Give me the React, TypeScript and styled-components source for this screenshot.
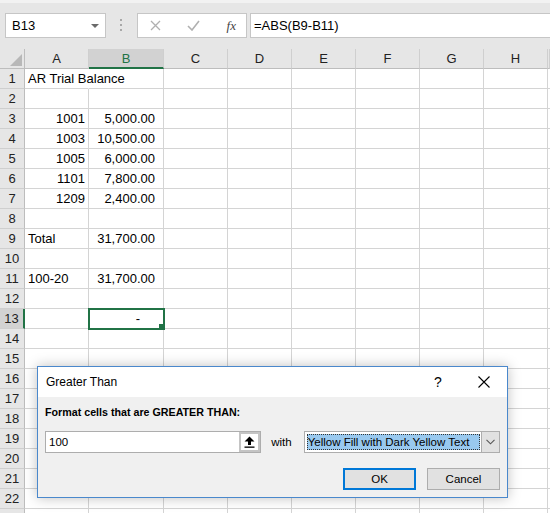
import React from 'react';
import styled, { createGlobalStyle } from 'styled-components';

const GlobalStyle = createGlobalStyle`
  html, body {
    margin: 0;
    padding: 0;
    background: #ffffff;
    overflow: hidden;
  }
  * { box-sizing: border-box; }
`;

const COLS = '25px 64px 75px 64px 64px 64px 64px 64px 64px 1fr';
const GREEN = '#217346';

const Page = styled.div`
  position: relative;
  width: 550px;
  height: 513px;
  overflow: hidden;
  font-family: 'Liberation Sans', Arial, sans-serif;
  font-size: 13px;
  color: #000;
`;

const TopBar = styled.div`
  height: 49px;
  background: #e6e6e6;
  border-top: 3px solid #f2f2f2;
  display: flex;
  align-items: flex-start;
  padding: 10px 0 0 5px;
`;

const NameBox = styled.div`
  width: 101px;
  height: 25px;
  background: #fff;
  border: 1px solid #c6c6c6;
  display: flex;
  align-items: center;
  justify-content: space-between;
  padding: 0 6px 0 6px;
  font-size: 13px;
`;

const DropArrow = styled.span`
  width: 0;
  height: 0;
  border-left: 4px solid transparent;
  border-right: 4px solid transparent;
  border-top: 4px solid #6a6a6a;
`;

const Grip = styled.div`
  width: 31px;
  height: 25px;
  display: flex;
  align-items: center;
  justify-content: center;
`;

const FxBox = styled.div`
  width: 110px;
  height: 25px;
  background: #fff;
  border: 1px solid #c6c6c6;
  display: flex;
  align-items: center;
  justify-content: space-between;
  padding: 0 10px 0 12px;
`;

const Fx = styled.span`
  font-family: 'Liberation Serif', 'Times New Roman', serif;
  font-style: italic;
  font-size: 13px;
  color: #444;
`;

const FormulaInput = styled.div`
  flex: 1;
  height: 25px;
  margin-left: 3px;
  background: #fff;
  border: 1px solid #c6c6c6;
  border-right: none;
  display: flex;
  align-items: center;
  padding-left: 3px;
`;

const Row = styled.div`
  display: grid;
  grid-template-columns: ${COLS};
  height: 20px;
`;

const ColHead = styled.div<{ $sel?: boolean }>`
  background: ${(p) => (p.$sel ? '#d2d2d2' : '#e6e6e6')};
  border-right: 1px solid #cfcfcf;
  border-bottom: ${(p) => (p.$sel ? `2px solid ${GREEN}` : '1px solid #bdbdbd')};
  color: ${(p) => (p.$sel ? GREEN : '#222')};
  display: flex;
  align-items: center;
  justify-content: center;
  padding-top: ${(p) => (p.$sel ? '1px' : '0')};
`;

const Corner = styled.div`
  background: #e6e6e6;
  border-right: 1px solid #bdbdbd;
  border-bottom: 1px solid #bdbdbd;
  position: relative;
  &::after {
    content: '';
    position: absolute;
    right: 2px;
    bottom: 2px;
    width: 0;
    height: 0;
    border-left: 12px solid transparent;
    border-bottom: 12px solid #b8b8b8;
  }
`;

const RowHead = styled.div<{ $sel?: boolean }>`
  background: ${(p) => (p.$sel ? '#d2d2d2' : '#e6e6e6')};
  border-right: ${(p) => (p.$sel ? `2px solid ${GREEN}` : '1px solid #bdbdbd')};
  border-bottom: 1px solid #cfcfcf;
  display: flex;
  align-items: center;
  justify-content: center;
  color: #222;
`;

const Cell = styled.div<{ $right?: boolean; $pad?: number; $open?: boolean }>`
  border-right: 1px solid ${(p) => (p.$open ? 'transparent' : '#d4d4d4')};
  border-bottom: 1px solid #d4d4d4;
  display: flex;
  align-items: center;
  justify-content: ${(p) => (p.$right ? 'flex-end' : 'flex-start')};
  padding: ${(p) => (p.$right ? `0 ${p.$pad ?? 3}px 0 0` : '0 0 0 3px')};
  white-space: nowrap;
  overflow: ${(p) => (p.$open ? 'visible' : 'hidden')};
  position: relative;
  z-index: ${(p) => (p.$open ? 1 : 0)};
`;

const ActiveCell = styled(Cell)`
  outline: 2px solid ${GREEN};
  outline-offset: -1px;
  z-index: 2;
  &::after {
    content: '';
    position: absolute;
    right: -3px;
    bottom: -3px;
    width: 6px;
    height: 6px;
    background: ${GREEN};
    border: 1px solid #fff;
  }
`;

const Dialog = styled.div`
  position: absolute;
  left: 37px;
  top: 366px;
  width: 471px;
  height: 132px;
  background: #f0f0f0;
  border: 1px solid #4a88cc;
  box-shadow: 0 0 12px rgba(0, 0, 0, 0.25);
  font-family: 'Liberation Sans', Arial, sans-serif;
  font-size: 11.5px;
  display: flex;
  flex-direction: column;
  z-index: 10;
`;

const TitleBar = styled.div`
  height: 30px;
  background: #fff;
  display: flex;
  align-items: center;
  padding: 0 0 0 8px;
  font-size: 12px;
`;

const TitleText = styled.span`
  flex: 1;
`;

const TitleBtn = styled.div`
  width: 46px;
  height: 30px;
  display: flex;
  align-items: center;
  justify-content: center;
  font-size: 14px;
`;

const Body = styled.div`
  flex: 1;
  display: flex;
  flex-direction: column;
  padding: 7px 7px 0 7px;
`;

const Label = styled.div`
  font-weight: bold;
  font-size: 10.7px;
  height: 16px;
  line-height: 16px;
`;

const InputRow = styled.div`
  margin-top: 11px;
  display: flex;
  align-items: center;
  height: 22px;
`;

const ValueBox = styled.div`
  width: 217px;
  height: 22px;
  background: #fff;
  border: 1px solid #adadad;
  display: flex;
  align-items: center;
  padding-left: 3px;
`;

const ValueText = styled.span`
  flex: 1;
`;

const PickBtn = styled.div`
  width: 21px;
  height: 20px;
  border: 2px solid #c4c4c4;
  background: #fff;
  display: flex;
  align-items: center;
  justify-content: center;
`;

const With = styled.span`
  margin: 0 12px 0 10px;
`;

const Select = styled.div`
  width: 197px;
  height: 22px;
  border: 1px solid #adadad;
  background: #fff;
  display: flex;
  align-items: stretch;
  padding: 2px 0 2px 2px;
`;

const SelectValue = styled.div`
  flex: 1;
  background: #99c9ef;
  outline: 1px dotted #333;
  outline-offset: -1px;
  display: flex;
  align-items: center;
  padding-left: 1px;
  white-space: nowrap;
  overflow: hidden;
`;

const SelectArrow = styled.div`
  width: 18px;
  margin: -2px 0 -2px 1px;
  background: #e1e1e1;
  border-left: 1px solid #adadad;
  display: flex;
  align-items: center;
  justify-content: center;
`;

const Buttons = styled.div`
  margin-top: 15px;
  display: flex;
  justify-content: flex-end;
  gap: 11px;
`;

const Button = styled.div<{ $primary?: boolean }>`
  width: 73px;
  height: 22px;
  background: #e1e1e1;
  border: ${(p) => (p.$primary ? '2px solid #0078d7' : '1px solid #adadad')};
  display: flex;
  align-items: center;
  justify-content: center;
`;

type CellData = { a?: string; b?: string; aLeft?: boolean; open?: boolean };

const data: Record<number, CellData> = {
  1: { a: 'AR Trial Balance', aLeft: true, open: true },
  3: { a: '1001', b: '5,000.00' },
  4: { a: '1003', b: '10,500.00' },
  5: { a: '1005', b: '6,000.00' },
  6: { a: '1101', b: '7,800.00' },
  7: { a: '1209', b: '2,400.00' },
  9: { a: 'Total', b: '31,700.00', aLeft: true },
  11: { a: '100-20', b: '31,700.00', aLeft: true },
};

const cols = ['A', 'B', 'C', 'D', 'E', 'F', 'G', 'H', ''];

const Dots = () => (
  <svg width="3" height="13" viewBox="0 0 3 13">
    <rect x="0" y="0" width="2" height="2" fill="#a8a8a8" />
    <rect x="0" y="5" width="2" height="2" fill="#a8a8a8" />
    <rect x="0" y="10" width="2" height="2" fill="#a8a8a8" />
  </svg>
);

const Cross = () => (
  <svg width="11" height="11" viewBox="0 0 11 11">
    <path d="M1 1 L10 10 M10 1 L1 10" stroke="#b0b0b0" strokeWidth="1.3" />
  </svg>
);

const Check = () => (
  <svg width="13" height="11" viewBox="0 0 13 11">
    <path d="M1 6 L5 10 L12 1" stroke="#b0b0b0" strokeWidth="1.6" fill="none" />
  </svg>
);

const UploadIcon = () => (
  <svg width="11" height="12" viewBox="0 0 11 12">
    <path d="M5.5 0.5 L10.5 5.5 L7 5.5 L7 9 L4 9 L4 5.5 L0.5 5.5 Z" fill="#000" />
    <rect x="0.5" y="10.5" width="10" height="1.3" fill="#000" />
  </svg>
);

const CloseIcon = () => (
  <svg width="12" height="12" viewBox="0 0 12 12">
    <path d="M0.5 0.5 L11.5 11.5 M11.5 0.5 L0.5 11.5" stroke="#000" strokeWidth="1.1" />
  </svg>
);

const Chevron = () => (
  <svg width="9" height="6" viewBox="0 0 9 6">
    <path d="M0.5 0.8 L4.5 4.8 L8.5 0.8" stroke="#555" strokeWidth="1.1" fill="none" />
  </svg>
);

export default function App() {
  const rows = Array.from({ length: 23 }, (_, i) => i + 1);
  return (
    <Page>
      <GlobalStyle />
      <TopBar>
        <NameBox>
          <span>B13</span>
          <DropArrow />
        </NameBox>
        <Grip>
          <Dots />
        </Grip>
        <FxBox>
          <Cross />
          <Check />
          <Fx>fx</Fx>
        </FxBox>
        <FormulaInput>=ABS(B9-B11)</FormulaInput>
      </TopBar>
      <Row>
        <Corner />
        {cols.map((c, i) => (
          <ColHead key={i} $sel={c === 'B'}>
            {c}
          </ColHead>
        ))}
      </Row>
      {rows.map((r) => {
        const d = data[r] || {};
        const active = r === 13;
        return (
          <Row key={r}>
            <RowHead $sel={active}>{r < 23 ? r : ''}</RowHead>
            <Cell $right={!d.aLeft} $open={d.open}>
              {d.a}
            </Cell>
            {active ? (
              <ActiveCell $right $pad={23}>
                -
              </ActiveCell>
            ) : (
              <Cell $right $pad={8}>
                {d.b}
              </Cell>
            )}
            {cols.slice(2).map((c, i) => (
              <Cell key={i} />
            ))}
          </Row>
        );
      })}
      <Dialog>
        <TitleBar>
          <TitleText>Greater Than</TitleText>
          <TitleBtn>?</TitleBtn>
          <TitleBtn>
            <CloseIcon />
          </TitleBtn>
        </TitleBar>
        <Body>
          <Label>Format cells that are GREATER THAN:</Label>
          <InputRow>
            <ValueBox>
              <ValueText>100</ValueText>
              <PickBtn>
                <UploadIcon />
              </PickBtn>
            </ValueBox>
            <With>with</With>
            <Select>
              <SelectValue>Yellow Fill with Dark Yellow Text</SelectValue>
              <SelectArrow>
                <Chevron />
              </SelectArrow>
            </Select>
          </InputRow>
          <Buttons>
            <Button $primary>OK</Button>
            <Button>Cancel</Button>
          </Buttons>
        </Body>
      </Dialog>
    </Page>
  );
}
